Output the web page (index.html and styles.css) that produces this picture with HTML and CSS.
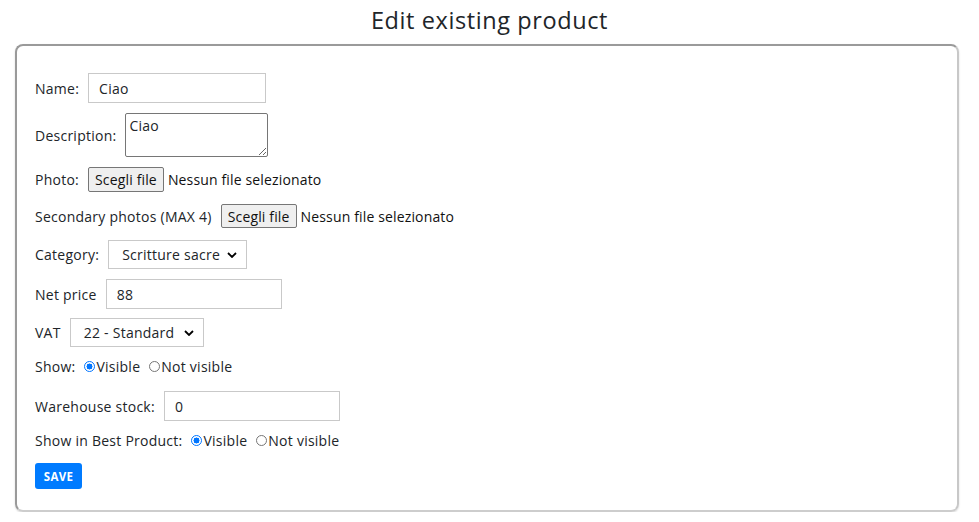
FILE: index.html
```html
<!DOCTYPE html>
<html lang="it">
<head>
<meta charset="utf-8">
<title>Edit existing product</title>
<link rel="stylesheet" href="styles.css">
</head>
<body>
<h1 class="title">Edit existing product</h1>
<form class="card">
  <div class="row r-name">
    <label class="lbl">Name:</label>
    <input class="text w178" type="text" value="Ciao">
  </div>
  <div class="row r-desc">
    <label class="lbl">Description:</label>
    <textarea class="area">Ciao</textarea>
  </div>
  <div class="row r-photo">
    <label class="lbl">Photo:</label>
    <span class="file"><span class="fbtn">Scegli file</span><span class="fname">Nessun file selezionato</span></span>
  </div>
  <div class="row r-sec">
    <label class="lbl">Secondary photos (MAX 4)</label>
    <span class="file"><span class="fbtn">Scegli file</span><span class="fname">Nessun file selezionato</span></span>
  </div>
  <div class="row r-cat">
    <label class="lbl">Category:</label>
    <span class="select w139">Scritture sacre<svg class="chev" viewBox="0 0 10 6" width="10" height="6"><path d="M1 1l4 4 4-4" fill="none" stroke="#000" stroke-width="1.8"/></svg></span>
  </div>
  <div class="row r-price">
    <label class="lbl">Net price</label>
    <input class="text w176" type="text" value="88">
  </div>
  <div class="row r-vat">
    <label class="lbl">VAT</label>
    <span class="select w134">22 - Standard<svg class="chev" viewBox="0 0 10 6" width="10" height="6"><path d="M1 1l4 4 4-4" fill="none" stroke="#000" stroke-width="1.8"/></svg></span>
  </div>
  <div class="row r-show">
    <label class="lbl">Show:</label>
    <span class="radio"><span class="dot on"></span>Visible</span>
    <span class="radio"><span class="dot"></span>Not visible</span>
  </div>
  <div class="row r-stock">
    <label class="lbl">Warehouse stock:</label>
    <input class="text w176" type="text" value="0">
  </div>
  <div class="row r-best">
    <label class="lbl">Show in Best Product:</label>
    <span class="radio"><span class="dot on"></span>Visible</span>
    <span class="radio"><span class="dot"></span>Not visible</span>
  </div>
  <div class="row r-save">
    <button class="save" type="button">SAVE</button>
  </div>
</form>
</body>
</html>
```

FILE: styles.css
```css
html, body {
  margin: 0;
  padding: 0;
  background: #fff;
}
body {
  font-family: "Open Sans", "Noto Sans", sans-serif;
  color: #212529;
  font-size: 14px;
  letter-spacing: 0.25px;
  width: 979px;
}
.title {
  margin: 0;
  padding-top: 5px;
  height: 30px;
  font-size: 23.5px;
  font-weight: 400;
  letter-spacing: 0.6px;
  text-align: center;
  line-height: 30px;
  color: #212529;
}
.card {
  margin: 9px 20px 0 15px;
  height: 468px;
  box-sizing: border-box;
  border: 2px solid;
  border-color: #9a9a9a #c8c8c8 #cdcdcd #9a9a9a;
  border-radius: 8px;
  box-shadow: 0 1px 2px rgba(0,0,0,0.15);
  padding: 27px 18px 0 18px;
  display: flex;
  flex-direction: column;
  align-items: flex-start;
}
.row {
  display: flex;
  align-items: center;
}
.lbl {
  margin-right: 9px;
  white-space: nowrap;
}
.r-name { height: 30px; }
.r-desc { height: 44px; margin-top: 10px; }
.r-photo { height: 25px; margin-top: 10px; }
.r-sec { height: 24px; margin-top: 12px; }
.r-cat { height: 29px; margin-top: 12px; }
.r-price { height: 30px; margin-top: 10px; }
.r-vat { height: 29px; margin-top: 9px; }
.r-show { height: 20px; margin-top: 9px; }
.r-stock { height: 30px; margin-top: 15px; }
.r-best { height: 20px; margin-top: 9px; }
.r-save { height: 26px; margin-top: 13px; }

.text {
  box-sizing: border-box;
  height: 30px;
  border: 1px solid #c9c9c9;
  border-radius: 0;
  padding: 0 10px;
  font: inherit;
  letter-spacing: inherit;
  color: #212529;
  outline: none;
}
.w178 { width: 178px; }
.w176 { width: 176px; }
.area {
  box-sizing: border-box;
  width: 143px;
  height: 44px;
  border: 1px solid #767676;
  border-radius: 2px;
  padding: 2px 3px;
  font: inherit;
  letter-spacing: inherit;
  color: #212529;
  resize: both;
}
.file {
  display: flex;
  align-items: center;
  letter-spacing: 0.15px;
}
.fbtn {
  box-sizing: border-box;
  height: 25px;
  padding: 0 6px;
  display: flex;
  align-items: center;
  background: #efefef;
  border: 1px solid #767676;
  border-radius: 2px;
  color: #111;
  margin-right: 4px;
}
.r-sec .fbtn { height: 24px; }
.fname { color: #111; }
.select {
  box-sizing: border-box;
  height: 29px;
  border: 1px solid #c9c9c9;
  padding: 0 9px 0 13px;
  display: flex;
  align-items: center;
  justify-content: space-between;
  color: #212529;
}
.w139 { width: 139px; }
.w134 { width: 134px; }
.chev { display: block; }
.radio {
  display: flex;
  align-items: center;
  margin-right: 9px;
}
.dot {
  box-sizing: border-box;
  width: 11px;
  height: 11px;
  border-radius: 50%;
  border: 1px solid #767676;
  margin-right: 1px;
  background: #fff;
}
.dot.on {
  border: 1px solid #0075ff;
  background: radial-gradient(circle, #0075ff 0 2.8px, #fff 3.2px 100%);
}
.save {
  height: 26px;
  width: 47px;
  border: 0;
  border-radius: 3px;
  background: #007bff;
  color: #fff;
  font: 700 11.5px "Open Sans", sans-serif;
  letter-spacing: 0.3px;
  padding: 0;
}
```
